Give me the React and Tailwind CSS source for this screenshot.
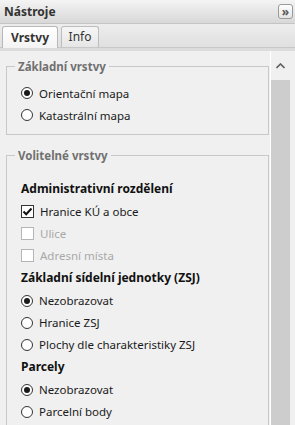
import React from 'react';

const font = { fontFamily: '"Noto Sans", "Open Sans", sans-serif' };

const Radio = ({ checked, label }) => (
    <div className="flex items-center h-[22px] pl-[14px]">
        <span className="w-[12px] h-[12px] rounded-full border border-[#333] bg-white flex items-center justify-center">
            {checked && <span className="w-[6px] h-[6px] rounded-full bg-[#1a1a1a]" />}
        </span>
        <span className="ml-[6px] text-[11.5px] text-[#1a1a1a]">{label}</span>
    </div>
);

const Check = ({ checked, disabled, label }) => (
    <div className="flex items-center h-[22px] pl-[14px]">
        <span className={`w-[13px] h-[13px] border bg-white flex items-center justify-center ${disabled ? 'border-[#b5b5b5]' : 'border-[#333]'}`}>
            {checked && (
                <svg width="11" height="11" viewBox="0 0 11 11">
                    <path d="M1.5 5.5 L4.2 8.2 L9.5 2.5" fill="none" stroke="#111" strokeWidth="2" />
                </svg>
            )}
        </span>
        <span className={`ml-[6px] text-[11.5px] ${disabled ? 'text-[#a8a8a8]' : 'text-[#1a1a1a]'}`}>{label}</span>
    </div>
);

const Heading = ({ children }) => (
    <div className="flex items-center h-[23px] pl-[14px] text-[12px] font-bold text-[#111]">{children}</div>
);

const Group = ({ title, children, className = '' }) => (
    <fieldset className={`border border-[#c8c8c8] ${className}`}>
        <legend className="ml-[8px] px-[3px] text-[11.5px] font-bold text-[#707070]">{title}</legend>
        {children}
    </fieldset>
);

export default function App() {
    return (
        <div className="w-[295px] h-[425px] overflow-hidden bg-[#f0f0f0] flex flex-col" style={font}>
            {/* Header */}
            <div className="h-[24px] shrink-0 flex items-center justify-between pl-[4px] pr-[2px] bg-gradient-to-b from-[#f4f4f4] to-[#d8d8d8] border-b border-[#c4c4c4]">
                <span className="text-[12px] font-bold text-[#333]">Nástroje</span>
                <button className="w-[15px] h-[15px] rounded-[3px] border border-[#9a9a9a] bg-gradient-to-b from-white to-[#e4e4e4] flex items-center justify-center text-[#555] text-[12px] leading-none font-bold">
                    »
                </button>
            </div>

            {/* Tabs */}
            <div className="h-[24px] shrink-0 flex items-end gap-[3px] pl-[2px] bg-gradient-to-b from-[#ededed] to-[#e0e0e0] border-b border-[#c8c8c8]">
                <div className="w-[56px] h-[22px] flex items-center justify-center rounded-t-[3px] border border-b-0 border-[#b8b8b8] bg-gradient-to-b from-white to-[#f4f4f4] text-[12px] font-bold text-[#333] -mb-px">
                    Vrstvy
                </div>
                <div className="w-[38px] h-[21px] flex items-center justify-center rounded-t-[3px] border border-b-0 border-[#bdbdbd] bg-gradient-to-b from-[#f6f6f6] to-[#e6e6e6] text-[12px] text-[#333]">
                    Info
                </div>
            </div>
            <div className="h-[3px] shrink-0 bg-[#dcdcdc]" />

            {/* Body */}
            <div className="flex-1 flex min-h-0">
                <div className="flex-1 pl-[6px] pr-px pt-[7px] flex flex-col gap-[12px]">
                    <Group title="Základní vrstvy" className="pt-[7px] pb-[8px]">
                        <Radio checked label="Orientační mapa" />
                        <Radio label="Katastrální mapa" />
                    </Group>
                    <Group title="Volitelné vrstvy" className="pt-[13px] pb-[8px]">
                        <Heading>Administrativní rozdělení</Heading>
                        <Check checked label="Hranice KÚ a obce" />
                        <Check disabled label="Ulice" />
                        <Check disabled label="Adresní místa" />
                        <Heading>Základní sídelní jednotky (ZSJ)</Heading>
                        <Radio checked label="Nezobrazovat" />
                        <Radio label="Hranice ZSJ" />
                        <Radio label="Plochy dle charakteristiky ZSJ" />
                        <Heading>Parcely</Heading>
                        <Radio checked label="Nezobrazovat" />
                        <Radio label="Parcelní body" />
                    </Group>
                </div>

                {/* Scrollbar */}
                <div className="w-px bg-white shrink-0" />
                <div className="w-[19px] shrink-0 flex flex-col bg-[#f0f0f0]">
                    <div className="h-[29px] flex items-center justify-center">
                        <svg width="9" height="6" viewBox="0 0 9 6">
                            <path d="M0.5 5 L4.5 1 L8.5 5" fill="none" stroke="#606060" strokeWidth="1.6" />
                        </svg>
                    </div>
                    <div className="flex-1 bg-[#cdcdcd]" />
                </div>
                <div className="w-[5px] shrink-0" />
            </div>
        </div>
    );
}
